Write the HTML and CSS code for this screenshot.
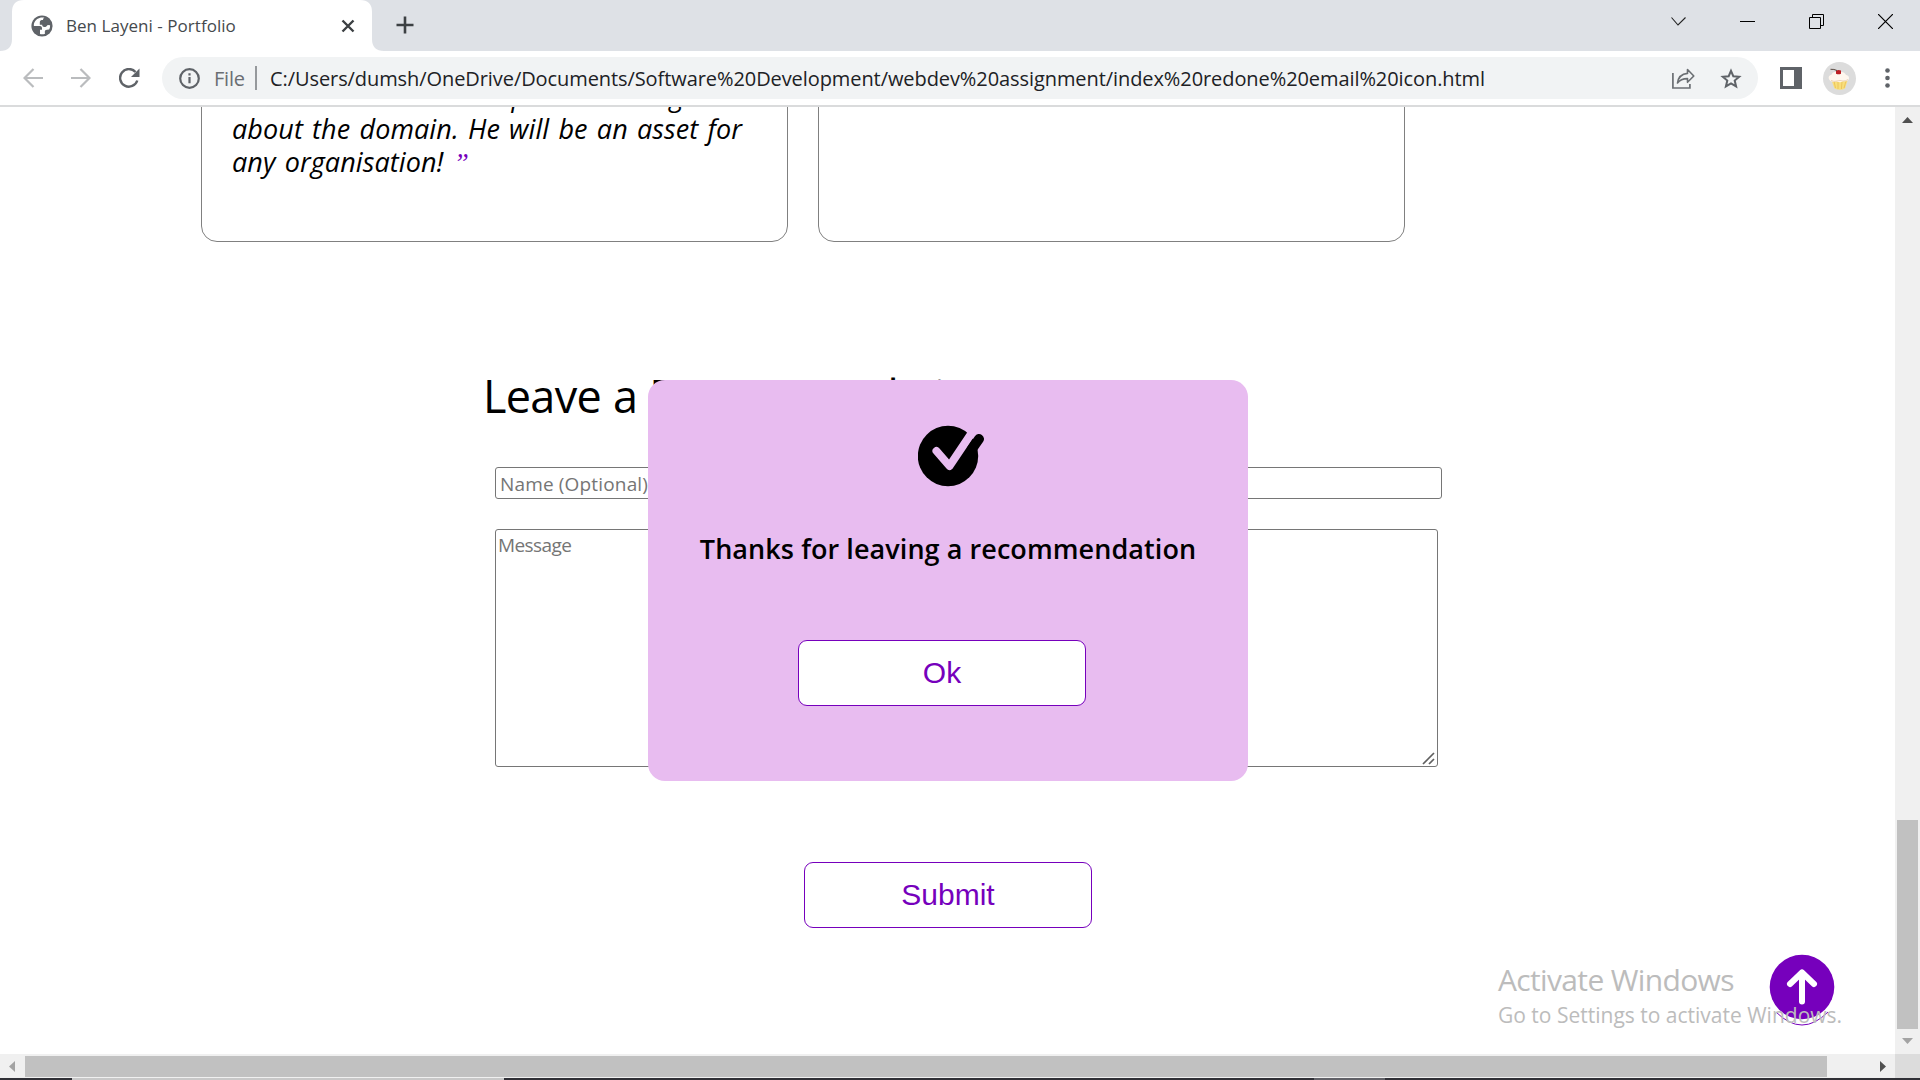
FILE: index.html
```html
<!DOCTYPE html>
<html lang="en">
<head>
<meta charset="utf-8">
<title>Ben Layeni - Portfolio</title>
<link rel="stylesheet" href="styles.css">
</head>
<body>
<div class="browser">
  <div class="tabstrip">
    <svg class="tab-shape" width="396" height="51" viewBox="0 0 396 51"><path fill="#fff" d="M0 51Q12 51 12 39V12Q12 0 24 0H360Q372 0 372 12V39Q372 51 384 51Z"/></svg>
    <div class="tab">
      <svg class="globe" width="22" height="22" viewBox="0 0 22 22"><circle cx="11" cy="11" r="10.6" fill="#5f6368"/><path fill="#fff" d="M13.5 2.8C9 1.600 4.500 4 3 8.500c-.2 1-.2 1.800-.1 2.500l6 .1c1.600.2 2.100 1 2.100 2.300v1.400h-2v4.200c1.500.4 3.500.3 5-.3l-.2-1.800c0-1.300.8-2.200 2.100-2.200l2.300-.1c.7-1.300 1-2.700.9-4.400l-2.400-.1c-.9 1.400-2 2.100-3.500 2-1.400-.1-2-1-2-2.300H8.800V7.200c0-1.600 1.100-2.200 3.200-2.200 0-1.200.5-1.900 1.500-2.200z"/></svg>
      <span class="tab-title">Ben Layeni - Portfolio</span>
      <svg class="tab-close" width="14" height="14" viewBox="0 0 14 14"><path d="M1.500 1.500l11 11M12.500 1.500l-11 11" stroke="#3c4043" stroke-width="2.400"/></svg>
    </div>
    <svg class="new-tab" width="18" height="18" viewBox="0 0 18 18"><path d="M9 .5v17M.5 9h17" stroke="#3c4043" stroke-width="2.600"/></svg>
    <div class="win-buttons">
      <svg width="15" height="15" viewBox="0 0 15 15"><path d="M.5 3.500L7 11l7.500-7.500" fill="none" stroke="#222" stroke-width="1.100"/></svg>
      <svg width="15" height="15" viewBox="0 0 15 15"><path d="M0 7.500h15" stroke="#000"/></svg>
      <svg width="15" height="15" viewBox="0 0 15 15"><path d="M.5 3.500h11v11H.5zM3.500 3.500v-3h11v11h-3" fill="none" stroke="#000"/></svg>
      <svg width="15" height="15" viewBox="0 0 15 15"><path d="M0 0l15 15M15 0L0 15" stroke="#000" stroke-width="1.200"/></svg>
    </div>
  </div>
  <div class="toolbar">
    <svg class="back" width="20" height="20" viewBox="0 0 20 20"><path d="M20 10H2M10.500 1L1.500 10l9 9" fill="none" stroke="#babcbe" stroke-width="2.200"/></svg>
    <svg class="forward" width="20" height="20" viewBox="0 0 20 20"><path d="M0 10h18M9.500 1l9 9-9 9" fill="none" stroke="#babcbe" stroke-width="2.200"/></svg>
    <svg class="reload" width="21" height="20" viewBox="0 0 21 20"><path d="M16.500 4A8.800 8.800 0 1 0 18.300 12.500" fill="none" stroke="#5f6368" stroke-width="2.400"/><path d="M20.500.5v8.500H12z" fill="#5f6368"/></svg>
    <div class="omnibox">
      <svg class="info" width="21" height="21" viewBox="0 0 21 21"><circle cx="10.500" cy="10.500" r="9.300" fill="none" stroke="#5f6368" stroke-width="2.200"/><path d="M10.500 9v6.200M10.500 5.300v2.200" stroke="#5f6368" stroke-width="2.200"/></svg>
      <span class="scheme">File</span>
      <span class="divider"></span>
      <span class="url">C:/Users/dumsh/OneDrive/Documents/Software%20Development/webdev%20assignment/index%20redone%20email%20icon.html</span>
      <svg class="share" width="23" height="21" viewBox="0 0 23 21"><path d="M.9 5v15h17v-4" fill="none" stroke="#6b6f73" stroke-width="1.700"/><path d="M15.500 1.500l6.300 6.500-6.300 6.300V10.600C11 10.600 8 11.500 5.500 15c.7-5.500 4-9 10-9.600z" fill="none" stroke="#6b6f73" stroke-width="1.600" stroke-linejoin="round"/></svg>
      <svg class="star" width="22" height="21" viewBox="0 0 22 21"><path d="M11 2.800l2.300 5.400 5.900.5-4.500 3.900 1.400 5.800-5.100-3.100-5.100 3.100 1.400-5.800L2.800 8.700l5.900-.5z" fill="none" stroke="#5f6368" stroke-width="2"/></svg>
    </div>
    <svg class="panel" width="22" height="22" viewBox="0 0 22 22"><path fill="#5f6368" fill-rule="evenodd" d="M0 0h22v22H0zM3 3v16h11V3z"/></svg>
    <svg class="avatar" width="33" height="33" viewBox="0 0 33 33"><circle cx="16.500" cy="16.500" r="16.500" fill="#dcdcdc"/><path d="M8 17h17l-3 9.500q-5 2.500-10.500 0z" fill="#f9df7b"/><path d="M11 19l1.500 7M15 20v7M19 20l-.6 7M23 19l-2 7" stroke="#e9bd55" stroke-width=".8"/><path d="M7 18.500C4.500 16 6 13 8.500 12.800 9 10.500 12 9.500 14 10h4c3 0 4.500 1.500 5 3 3 .3 4 3.500 2 5.300-2 2-4 .2-5.500 1.200-2.500 1.400-4 .2-6 0-2.500.5-5 .8-6.500-1z" fill="#fff7ee"/><path d="M8 18.500q3 1.500 6 .5t6 0q3 0 5-1.500" fill="none" stroke="#e8c9a8" stroke-width=".8"/><path d="M13 8.500q2.500-1 5 0v3.200q-2.500 1.200-5 0z" fill="#bc1f24"/><path d="M14 8.500Q11 7 7.500 7.300" fill="none" stroke="#5a4b43"/></svg>
    <svg class="more" width="5" height="20" viewBox="0 0 5 20"><g fill="#5f6368"><circle cx="2.500" cy="2.500" r="2.300"/><circle cx="2.500" cy="10" r="2.300"/><circle cx="2.500" cy="17.500" r="2.300"/></g></svg>
  </div>
  <div class="viewport">
    <main class="page">
      <section class="cards">
        <article class="card"><p class="quote">and has also shown expert knowledge<br>about the domain. He will be an asset for<br>any organisation! <span class="mark">”</span></p></article>
        <article class="card"></article>
      </section>
      <section class="form">
        <h2 class="heading">Leave a <span class="heading-tight">Recommendation</span></h2>
        <input class="name" type="text" placeholder="Name (Optional)">
        <div class="message-wrap">
          <textarea class="message" placeholder="Message"></textarea>
          <svg class="grip" width="13" height="13" viewBox="0 0 13 13"><path d="M1 12L12 1M7 12l5-5" stroke="#606060" stroke-width="1.700"/></svg>
        </div>
        <button class="btn submit">Submit</button>
      </section>
      <div class="popup">
        <svg class="check" width="66" height="62" viewBox="0 0 66 62"><circle cx="30" cy="31" r="30.200" fill="#000"/><path d="M18.500 26L31.500 41L53 9" fill="none" stroke="#e8bcf0" stroke-width="8" stroke-linecap="round" stroke-linejoin="round"/><path d="M54 24L61 14" stroke="#000" stroke-width="10" stroke-linecap="round"/></svg>
        <p class="thanks">Thanks for leaving a recommendation</p>
        <button class="btn ok">Ok</button>
      </div>
      <div class="to-top">
        <svg width="66" height="73" viewBox="0 0 66 73"><path d="M7 58Q33 84 59 58" fill="none" stroke="#7600bc"/><circle cx="33" cy="33" r="32.300" fill="#7600bc"/><path d="M33 47.500V19M21 30l12-11.500L45 30" fill="none" stroke="#fff" stroke-width="6" stroke-linecap="round" stroke-linejoin="round"/></svg>
      </div>
      <div class="watermark"><p class="wm-title">Activate Windows</p><p class="wm-text">Go to Settings to activate Windows.</p></div>
    </main>
    <div class="vbar">
      <svg width="11" height="6" viewBox="0 0 11 6"><path d="M0 6L5.500 0 11 6z" fill="#505050"/></svg>
      <div class="vthumb"></div>
      <svg width="11" height="6" viewBox="0 0 11 6"><path d="M0 0h11L5.500 6z" fill="#a3a3a3"/></svg>
    </div>
    <div class="hbar">
      <svg width="6" height="11" viewBox="0 0 6 11"><path d="M6 0v11L0 5.500z" fill="#a3a3a3"/></svg>
      <div class="hthumb"></div>
      <svg width="6" height="11" viewBox="0 0 6 11"><path d="M0 0v11l6-5.500z" fill="#505050"/></svg>
    </div>
    <div class="corner"></div>
  </div>
  <div class="taskbar"><i class="t1"></i><i class="t2"></i><i class="t3"></i><i class="t4"></i></div>
</div>
</body>
</html>
```
FILE: styles.css
```css
* { box-sizing: border-box; }
body { margin: 0; overflow: hidden; background: #fff; }
p, h2 { margin: 0; }
svg { display: block; flex: none; }
.browser { width: 1920px; height: 1080px; display: flex; flex-direction: column; font-family: "Open Sans", sans-serif; }

.tabstrip { position: relative; height: 51px; flex: none; display: flex; align-items: flex-start; background: #dee1e6; }
.tab-shape { position: absolute; left: 0; top: 0; }
.tab { position: relative; width: 372px; height: 51px; display: flex; align-items: center; padding-left: 31px; }
.tab-title { margin-left: 13px; width: 275px; font-size: 17px; letter-spacing: .04px; color: #45494d; white-space: nowrap; }
.new-tab { margin: 16px 0 0 24px; }
.win-buttons { margin: 14px 27px 0 auto; display: flex; gap: 54px; }

.toolbar { height: 56px; flex: none; display: flex; align-items: center; border-bottom: 2px solid #dadbdc; }
.back { margin-left: 23px; }
.forward { margin-left: 28px; }
.reload { margin-left: 28px; }
.omnibox { margin-left: 22px; width: 1596px; height: 42px; border-radius: 21px; background: #f1f3f4; display: flex; align-items: center; padding-left: 17px; }
.scheme { margin-left: 14px; width: 31px; font-size: 20px; letter-spacing: -.2px; color: #6a6e72; }
.divider { margin-left: 10px; width: 2px; height: 24px; background: #96999c; }
.url { margin-left: 13px; width: 1402px; font-size: 20px; letter-spacing: -.08px; color: #202124; white-space: nowrap; }
.star { margin-left: 25px; }
.panel { margin-left: 22px; }
.avatar { margin-left: 21px; }
.more { margin-left: 29px; }

.viewport { height: 971px; flex: none; display: grid; grid-template-columns: 1895px 25px; grid-template-rows: 947px 24px; }
.page { position: relative; overflow: hidden; background: #fff; }
.cards { display: flex; gap: 30px; padding-left: 201px; height: 135px; }
.card { width: 587px; height: 635px; margin-top: -500px; border: 1px solid #808080; border-radius: 16px; padding: 471px 30px 0; }
.quote { font-size: 27px; line-height: 33px; font-style: italic; letter-spacing: .08px; word-spacing: 2.1px; color: #000; white-space: nowrap; }
.mark { margin-left: 1px; color: #7600bc; font-family: "Liberation Serif", serif; }

.form { width: 960px; margin: 127px 0 0 483px; display: flex; flex-direction: column; align-items: flex-start; }
.heading { font-size: 45px; line-height: 54px; font-weight: 400; letter-spacing: -.7px; word-spacing: 1px; color: #000; }
.heading-tight { letter-spacing: -2px; }
.name, .message { background: #fff; border: 1px solid #767676; border-radius: 3px; font-family: "Open Sans", sans-serif; font-size: 19px; outline: none; }
.name::placeholder, .message::placeholder { color: #757575; }
.name { margin: 44px 0 0 12px; width: 947px; height: 32px; padding: 2px 4px 0; letter-spacing: .16px; }
.message-wrap { position: relative; margin: 30px 0 0 12px; width: 943px; height: 238px; }
.message { display: block; width: 943px; height: 238px; padding: 2px; letter-spacing: -.6px; resize: none; }
.grip { position: absolute; right: 3px; bottom: 2px; }
.btn { width: 288px; height: 66px; padding: 0; border: 1px solid #7600bc; border-radius: 9px; background: #fff; color: #7600bc; font: 30px "Liberation Sans", sans-serif; }
.submit { margin: 95px 0 0 321px; }

.popup { position: absolute; left: 648px; top: 273.4px; width: 600px; height: 401px; border-radius: 17px; background: #e8bcf0; display: flex; flex-direction: column; align-items: center; }
.check { margin: 44.6px 0 0 5px; }
.thanks { margin-top: 44.4px; font-size: 27px; line-height: 36px; font-weight: 600; letter-spacing: .07px; white-space: nowrap; color: #000; }
.ok { margin: 72.6px 12px 0 0; }
.to-top { position: absolute; left: 1769px; top: 847px; }
.watermark { position: absolute; left: 1498px; top: 851px; color: #bcbcbc; white-space: nowrap; }
.wm-title { font-size: 30px; line-height: 44px; letter-spacing: -.65px; }
.wm-text { font-size: 21px; line-height: 26px; }

.vbar { background: #f0f0f0; display: flex; flex-direction: column; align-items: center; padding-top: 10px; }
.vthumb { width: 21px; height: 209px; margin: 697px 0 9px; background: #c1c1c1; }
.hbar { background: #f0f0f0; display: flex; align-items: center; padding-left: 9px; }
.hthumb { width: 1802px; height: 21px; margin: 0 53px 0 10px; background: #c1c1c1; }
.corner { background: #dcdcdc; }
.taskbar { height: 2px; display: flex; background: #303036; }
.t1 { width: 72px; }
.t2 { width: 432px; background: #c8c8c8; }
.t3 { width: 810px; }
.t4 { width: 71px; background: #626268; }
```
